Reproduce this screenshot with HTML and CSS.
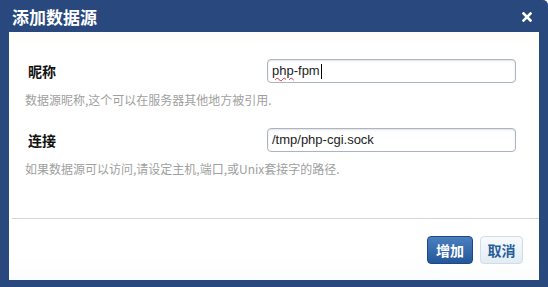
FILE: index.html
```html
<!DOCTYPE html>
<html>
<head>
	<title>添加数据源</title>
<link rel="stylesheet" href="styles.css">
</head>
<body>
	<div class="dialog">
		<div class="titlebar">
			<span class="title">添加数据源</span>
			<a href="#" class="close">
				<svg width="10" height="10" viewBox="0 0 10 10"><path d="M1.5 1.5 L8.5 8.5 M8.5 1.5 L1.5 8.5" stroke="#fff" stroke-width="2.6" stroke-linecap="square"/></svg>
			</a>
		</div>

		<div class="panel">
			<div class="form">
				<div class="row">
					<label class="label">昵称</label>
					<div class="field"><span class="misspelt">php</span>-fpm<span class="caret"></span></div>
				</div>
				<p class="help">数据源昵称,这个可以在服务器其他地方被引用.</p>

				<div class="row second">
					<label class="label">连接</label>
					<div class="field">/tmp/php-cgi.sock</div>
				</div>
				<p class="help">如果数据源可以访问,请设定主机,端口,或Unix套接字的路径.</p>
			</div>

			<div class="footer">
				<button class="btn primary">增加</button>
				<button class="btn cancel">取消</button>
			</div>
		</div>
	</div>
</body>
</html>
```
FILE: styles.css
```css
body {
  margin: 0;
  font-family: "Liberation Sans", "Noto Sans CJK SC", sans-serif;
  background: #fff;
}

.dialog {
  width: 548px;
  height: 287px;
  box-sizing: border-box;
  background-color: #29497e;
  padding: 0 9px 7px 9px;
  border-top-right-radius: 5px;
  display: flex;
  flex-direction: column;
}

.titlebar {
  height: 32px;
  display: flex;
  justify-content: space-between;
  align-items: center;
  padding-left: 3px;
  padding-right: 7px;
}

.title {
  color: #fff;
  font-size: 17px;
  font-weight: bold;
  font-family: "Noto Sans CJK SC", sans-serif;
}

.close {
  display: flex;
  margin-top: 2px;
}

.panel {
  flex: 1;
  background: linear-gradient(#fffdf6, #ffffff 14px, #ffffff 90%, #fbfcfd);
  display: flex;
  flex-direction: column;
}

.form {
  height: 187px;
  box-sizing: border-box;
  padding: 27px 23px 0 16px;
  border-bottom: 1px solid #d4d4d4;
  margin-left: 3px;
}

.row {
  display: flex;
  align-items: center;
}

.row.second {
  margin-top: 21px;
}

.label {
  width: 239px;
  font-size: 14px;
  font-weight: bold;
  color: #111;
  font-family: "Noto Sans CJK SC", sans-serif;
}

.field {
  flex: 1;
  height: 24px;
  box-sizing: border-box;
  border: 1px solid #aab4c2;
  border-radius: 4px;
  box-shadow: inset 0 1px 2px rgba(0, 0, 0, 0.12);
  background: #fff;
  padding: 0 4px;
  font-size: 13px;
  line-height: 22px;
  color: #222;
  display: flex;
  align-items: center;
}

.misspelt {
  text-decoration: underline wavy #d33;
  text-decoration-thickness: 1px;
  text-underline-offset: 2px;
}

.caret {
  width: 1px;
  height: 15px;
  background: #000;
  margin-left: 1px;
}

.help {
  margin: 10px 0 0 -3px;
  font-size: 12px;
  line-height: 14px;
  color: #a0a0a0;
  font-family: "Noto Sans CJK SC", sans-serif;
}

.footer {
  flex: 1;
  display: flex;
  justify-content: flex-end;
  align-items: flex-start;
  gap: 7px;
  padding: 17px 16px 0 0;
}

.btn {
  height: 28px;
  padding: 0;
  white-space: nowrap;
  border-radius: 4px;
  font-size: 14px;
  font-weight: bold;
  font-family: "Noto Sans CJK SC", sans-serif;
  cursor: pointer;
}

.primary {
  width: 46px;
  color: #fff;
  background: linear-gradient(#4a7fc0, #24579a);
  border: 1px solid #1c4883;
}

.cancel {
  width: 43px;
  color: #2a5d9b;
  background: linear-gradient(#f7fafd, #e3ecf4);
  border: 1px solid #d0dce8;
}
```
